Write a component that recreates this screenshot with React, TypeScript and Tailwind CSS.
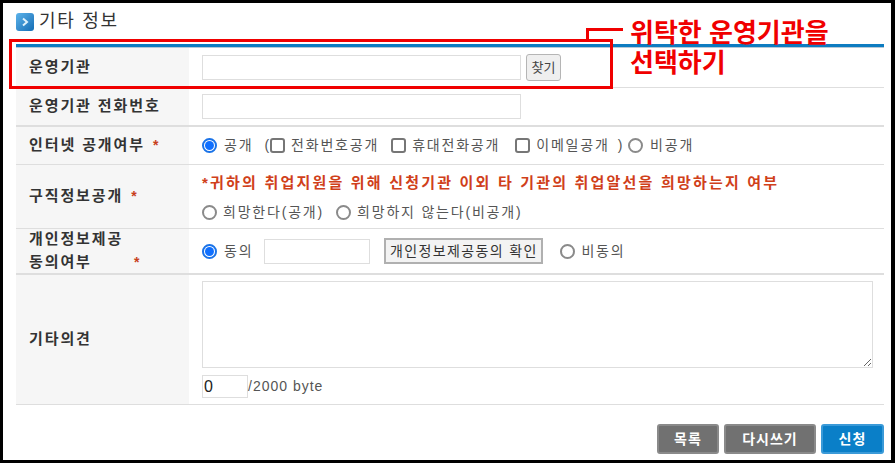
import type { ReactNode } from "react";

const font = { fontFamily: '"Liberation Sans", "Noto Sans CJK KR", sans-serif' };

function Radio({ checked = false, className = "" }: { checked?: boolean; className?: string }) {
    return (
        <span className={`flex items-center justify-center w-[15px] h-[15px] shrink-0 rounded-full border-2 bg-white ${checked ? "border-[#1a73e8]" : "border-[#8a8a8a]"} ${className}`}>
            {checked && <span className="w-[9px] h-[9px] rounded-full bg-[#0f6fff]"></span>}
        </span>
    );
}

function Check({ className = "" }: { className?: string }) {
    return <span className={`block w-[15px] h-[15px] shrink-0 rounded-[3px] border-2 border-[#767676] bg-white ${className}`}></span>;
}

function Row({ label, h, border, children }: { label: ReactNode; h: string; border: string; children: ReactNode }) {
    return (
        <div className={`flex ${h} ${border} border-[#dedede]`}>
            <div className="flex items-center w-[173px] shrink-0 pl-[13px] bg-[#f6f6f6] text-[15px] font-semibold tracking-[1.9px] text-[#333]">
                {label}
            </div>
            <div className="flex-1 min-w-0 pl-[13px] text-[14px] tracking-[1.8px] text-[#555]">{children}</div>
        </div>
    );
}

function Star({ className = "" }: { className?: string }) {
    return <span className={`text-[14px] text-[#c8401c] font-bold ${className}`}>*</span>;
}

export default function App() {
    return (
        <div style={font} className="relative w-[895px] h-[463px] overflow-hidden bg-white border-t-[3px] border-b-[3px] border-l-[3px] border-r-[4px] border-black">
            <div className="pl-[13px] pr-[7px]">
                <div className="flex items-center h-[41px] gap-[5px] pb-[4px]">
                    <span className="flex items-center justify-center w-[18px] h-[18px] rounded-[3px] bg-gradient-to-br from-[#5cb3ea] to-[#0f6db5]">
                        <svg width="10" height="10" viewBox="0 0 10 10" fill="none" stroke="#dff1fb" strokeWidth="2">
                            <path d="M3 1.5 L7 5 L3 8.5" />
                        </svg>
                    </span>
                    <h2 className="text-[18px] tracking-[1.7px] text-[#333] font-normal">기타 정보</h2>
                </div>

                <div className="border-t-[3px] border-[#0d7cc1]">
                    <div className="h-px bg-[#b7c9d6]"></div>
                    <Row label="운영기관" h="h-[40px]" border="border-b">
                        <div className="flex items-center h-full gap-[5px]">
                            <input className="w-[319px] h-[25px] border border-[#dedede] bg-white" />
                            <button className="w-[35px] h-[27px] rounded-[3px] border border-[#b5b5b5] bg-[#efefef] text-[13px] tracking-normal text-[#444]">찾기</button>
                        </div>
                    </Row>
                    <Row label="운영기관 전화번호" h="h-[39px]" border="border-b-[2px]">
                        <div className="flex items-center h-full">
                            <input className="w-[319px] h-[25px] border border-[#dedede] bg-white" />
                        </div>
                    </Row>
                    <Row label={<span>인터넷 공개여부 <Star className="ml-[2px]" /></span>} h="h-[38px]" border="border-b">
                        <div className="flex items-center h-full">
                            <Radio checked />
                            <span className="ml-[7px]">공개</span>
                            <span className="ml-[11px] tracking-normal">(</span>
                            <Check className="ml-[1px]" />
                            <span className="ml-[6px]">전화번호공개</span>
                            <Check className="ml-[12px]" />
                            <span className="ml-[6px]">휴대전화공개</span>
                            <Check className="ml-[15px]" />
                            <span className="ml-[6px]">이메일공개</span>
                            <span className="ml-[8px]">)</span>
                            <Radio className="ml-[4px]" />
                            <span className="ml-[7px]">비공개</span>
                        </div>
                    </Row>
                    <Row label={<span>구직정보공개 <Star className="ml-[2px]" /></span>} h="h-[64px]" border="border-b">
                        <div className="flex flex-col h-full pt-[7px] gap-[7px]">
                            <p className="text-[15px] text-[#d0401a] font-semibold tracking-[2.2px]">*귀하의 취업지원을 위해 신청기관 이외 타 기관의 취업알선을 희망하는지 여부</p>
                            <div className="flex items-center">
                                <Radio />
                                <span className="ml-[6px]">희망한다(공개)</span>
                                <Radio className="ml-[12px]" />
                                <span className="ml-[6px]">희망하지 않는다(비공개)</span>
                            </div>
                        </div>
                    </Row>
                    <Row
                        label={
                            <div className="leading-[23px] pb-[2px]">
                                <div>개인정보제공</div>
                                <div>동의여부 <Star className="ml-[36px]" /></div>
                            </div>
                        }
                        h="h-[46px]"
                        border="border-b-[2px]"
                    >
                        <div className="flex items-center h-full">
                            <Radio checked />
                            <span className="ml-[7px]">동의</span>
                            <input className="ml-[11px] w-[106px] h-[25px] border border-[#dedede] bg-white" />
                            <button className="ml-[14px] w-[159px] h-[26px] border-2 border-[#b0b0b0] bg-[#f3f3f3] text-[14px] tracking-[1.35px] text-[#333]">개인정보제공동의 확인</button>
                            <Radio className="ml-[17px]" />
                            <span className="ml-[6px]">비동의</span>
                        </div>
                    </Row>
                    <Row label="기타의견" h="h-[130px]" border="border-b">
                        <div className="flex flex-col h-full pt-[6px] gap-[7px]">
                            <textarea className="block w-[671px] h-[87px] border border-[#dedede] bg-white"></textarea>
                            <div className="flex items-center">
                                <input defaultValue="0" className="w-[46px] h-[23px] border border-[#dedede] bg-white pl-px text-[16px] tracking-normal text-[#222]" />
                                <span className="text-[14px] tracking-[1px]">/2000 byte</span>
                            </div>
                        </div>
                    </Row>
                </div>

                <div className="flex justify-end gap-[5px] mt-[19px] text-[14px] font-bold tracking-[1px] text-white">
                    <button className="w-[62px] h-[30px] rounded-[3px] border-2 border-[#8a8a8a] bg-[#717171]">목록</button>
                    <button className="w-[92px] h-[30px] rounded-[3px] border-2 border-[#8a8a8a] bg-[#717171]">다시쓰기</button>
                    <button className="w-[63px] h-[30px] rounded-[3px] border-2 border-[#3a9ad8] bg-[#0a7fc8]">신청</button>
                </div>
            </div>

            {/* annotation on top of the form */}
            <div className="absolute left-[6px] top-[36px] w-[604px] h-[50px] border-[3px] border-[#f00000]"></div>
            <div className="absolute left-[583px] top-[25px] w-[37px] h-[12px] border-t-[3px] border-l-[3px] border-[#f00000]"></div>
            <div className="absolute left-[627px] top-[15px] text-[26px] leading-[30px] font-bold text-[#f00000]">
                <div>위탁한 운영기관을</div>
                <div>선택하기</div>
            </div>
        </div>
    );
}
